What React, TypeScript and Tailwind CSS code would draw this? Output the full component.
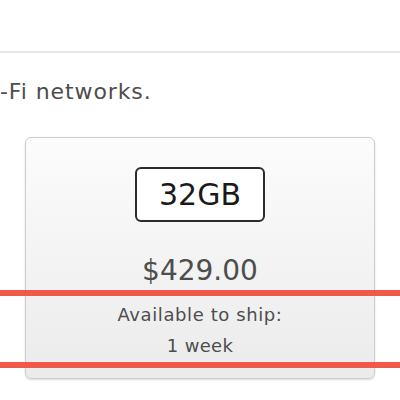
export default function App() {
  return (
    <div
      className="relative w-[400px] h-[400px] overflow-hidden bg-white"
      style={{ fontFamily: '"DejaVu Sans", "Liberation Sans", sans-serif' }}
    >
      {/* top divider */}
      <div className="h-[51px]" />
      <div className="h-[2px] bg-[#e8e8e8]" />

      <p className="mt-[28px] text-[22px] leading-[22px] tracking-[0.9px] text-[#4d4d4d]">-Fi networks.</p>

      {/* product card */}
      <div className="mt-[34px] ml-[25px] w-[350px] h-[242px] rounded-[6px] border border-[#cdcdcd] bg-gradient-to-b from-[#fcfcfc] to-[#ebebeb] shadow-[0_1px_2px_rgba(0,0,0,0.15)] flex flex-col items-center pt-[29px]">
        <div className="w-[130px] h-[55px] rounded-[6px] border-2 border-[#2b2b2b] bg-white flex items-center justify-center text-[30px] leading-none text-[#1a1a1a]">
          32GB
        </div>
        <div className="mt-[35px] text-[28px] leading-[28px] text-[#4d4d4d]">$429.00</div>
        <div className="mt-[21px] text-[18px] leading-[18px] tracking-[0.6px] text-[#4d4d4d]">Available to ship:</div>
        <div className="mt-[13px] text-[18px] leading-[18px] tracking-[0.3px] text-[#4d4d4d]">1 week</div>
      </div>

      {/* annotation lines */}
      <div className="absolute left-0 right-0 top-[290px] h-[6px] bg-[#f0584a]" />
      <div className="absolute left-0 right-0 top-[362px] h-[6px] bg-[#f0584a]" />
    </div>
  );
}
